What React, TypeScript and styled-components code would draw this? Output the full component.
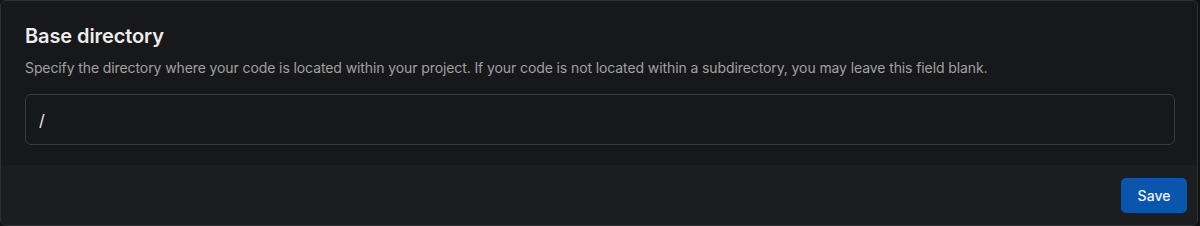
import React from "react";
import styled, { createGlobalStyle } from "styled-components";

const GlobalStyle = createGlobalStyle`
    html, body {
        margin: 0;
        padding: 0;
        background: #111213;
    }
    body {
        font-family: Inter, "Noto Sans", sans-serif;
        -webkit-font-smoothing: antialiased;
    }
`

const Card = styled.section`
    width: 1198px;
    height: 226px;
    box-sizing: border-box;
    border: 1px solid #2e3033;
    border-radius: 6px;
    background: #17181a;
    overflow: hidden;
    display: flex;
    flex-direction: column;
`

const Body = styled.div`
    padding: 20px 22px 0 24px;
    height: 164px;
    box-sizing: border-box;
`

const Title = styled.h2`
    margin: 0;
    font-size: 20px;
    font-weight: 600;
    line-height: 30px;
    letter-spacing: -0.1px;
    color: #ededed;
`

const Description = styled.p`
    margin: 7px 0 0 0;
    font-size: 14px;
    line-height: 20px;
    letter-spacing: -0.1px;
    color: #a1a1a1;
`

const Input = styled.input`
    display: block;
    margin-top: 16px;
    width: 100%;
    height: 51px;
    box-sizing: border-box;
    padding: 0 13px;
    border: 1px solid #3a3c40;
    border-radius: 6px;
    background: #17181a;
    color: #ededed;
    font-family: Inter, "Noto Sans", sans-serif;
    font-size: 16px;
    outline: none;
`

const Footer = styled.div`
    flex: 1;
    background: #1b1e1f;
    display: flex;
    align-items: center;
    justify-content: flex-end;
    padding: 0 10px 0 24px;
`

const Button = styled.button`
    height: 35px;
    width: 66px;
    padding: 0;
    border: none;
    border-radius: 5px;
    background: #0b56ad;
    color: #f0f4fa;
    font-family: Inter, "Noto Sans", sans-serif;
    font-size: 14px;
    font-weight: 500;
    cursor: pointer;
`

export default function App() {
    return (
        <>
            <GlobalStyle/>
            <Card>
                <Body>
                    <Title>Base directory</Title>
                    <Description>
                        Specify the directory where your code is located within your project. If your code is not located within a subdirectory, you may leave this field blank.
                    </Description>
                    <Input defaultValue="/"/>
                </Body>
                <Footer>
                    <Button>Save</Button>
                </Footer>
            </Card>
        </>
    )
}
